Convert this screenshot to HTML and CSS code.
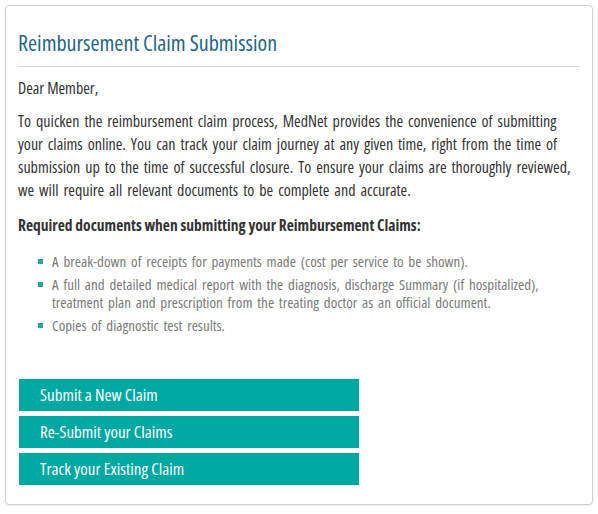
FILE: index.html
```html
<!DOCTYPE html>
<html lang="en">
<head>
  <meta charset="UTF-8">
  <meta name="viewport" content="width=device-width, initial-scale=1.0">
  <title>Reimbursement Claim Submission</title>
  <link rel="stylesheet" href="styles.css">
</head>
<body>

  <div class="claim-box">
    <h2 class="claim-title">Reimbursement Claim Submission</h2>

    <p class="greeting">Dear Member,</p>

    <p class="intro">
      To quicken the reimbursement claim process, MedNet provides the convenience of submitting
      your claims online. You can track your claim journey at any given time, right from the time of
      submission up to the time of successful closure. To ensure your claims are thoroughly reviewed,
      we will require all relevant documents to be complete and accurate.
    </p>

    <p class="docs-heading">Required documents when submitting your Reimbursement Claims:</p>

    <ul class="docs-list">
      <li>A break-down of receipts for payments made (cost per service to be shown).</li>
      <li>A full and detailed medical report with the diagnosis, discharge Summary (if hospitalized), treatment plan and prescription from the treating doctor as an official document.</li>
      <li>Copies of diagnostic test results.</li>
    </ul>

    <div class="claim-actions">
      <a href="#" class="claim-btn">Submit a New Claim</a>
      <a href="#" class="claim-btn">Re-Submit your Claims</a>
      <a href="#" class="claim-btn">Track your Existing Claim</a>
    </div>
  </div>

</body>
</html>
```

FILE: styles.css
```css
body {
  margin: 0;
  padding: 5px;
  font-family: "Open Sans", sans-serif;
  font-stretch: 75%;
  background-color: #fff;
  color: #333;
}

.claim-box {
  width: 562px;
  height: 486px;
  padding: 12px 12px 0 12px;
  border: 1px solid #cfcfcf;
  border-radius: 4px;
  box-shadow: 0 1px 2px rgba(0, 0, 0, 0.08);
}

.claim-title {
  margin: 11px 0 0 0;
  padding-bottom: 10px;
  border-bottom: 1px solid #d6d6d6;
  font-size: 22px;
  line-height: 27px;
  font-weight: normal;
  color: #1f6784;
}

.greeting {
  margin: 10px 0 0 0;
  font-size: 16px;
  line-height: 23px;
}

.intro {
  margin: 10px 0 0 0;
  font-size: 16px;
  line-height: 23px;
  word-spacing: 2px;
}

.docs-heading {
  margin: 12px 0 0 0;
  font-size: 15.5px;
  line-height: 23px;
  font-weight: bold;
}

.docs-list {
  margin: 15px 0 0 0;
  padding-left: 34px;
  list-style: none;
  font-size: 15px;
  line-height: 18px;
  word-spacing: 2px;
  color: #7a7a7a;
}

.docs-list li {
  position: relative;
  margin-bottom: 5px;
}

.docs-list li::before {
  content: "";
  position: absolute;
  left: -14px;
  top: 7px;
  width: 5px;
  height: 5px;
  background-color: #1fa69e;
}

.claim-actions {
  margin-top: 45px;
  width: 340px;
  display: flex;
  flex-direction: column;
  gap: 5px;
  margin-left: 1px;
}

.claim-btn {
  display: block;
  height: 32px;
  line-height: 32px;
  padding-left: 21px;
  background-color: #00a8a2;
  color: #fff;
  font-size: 17px;
  text-decoration: none;
}
```
